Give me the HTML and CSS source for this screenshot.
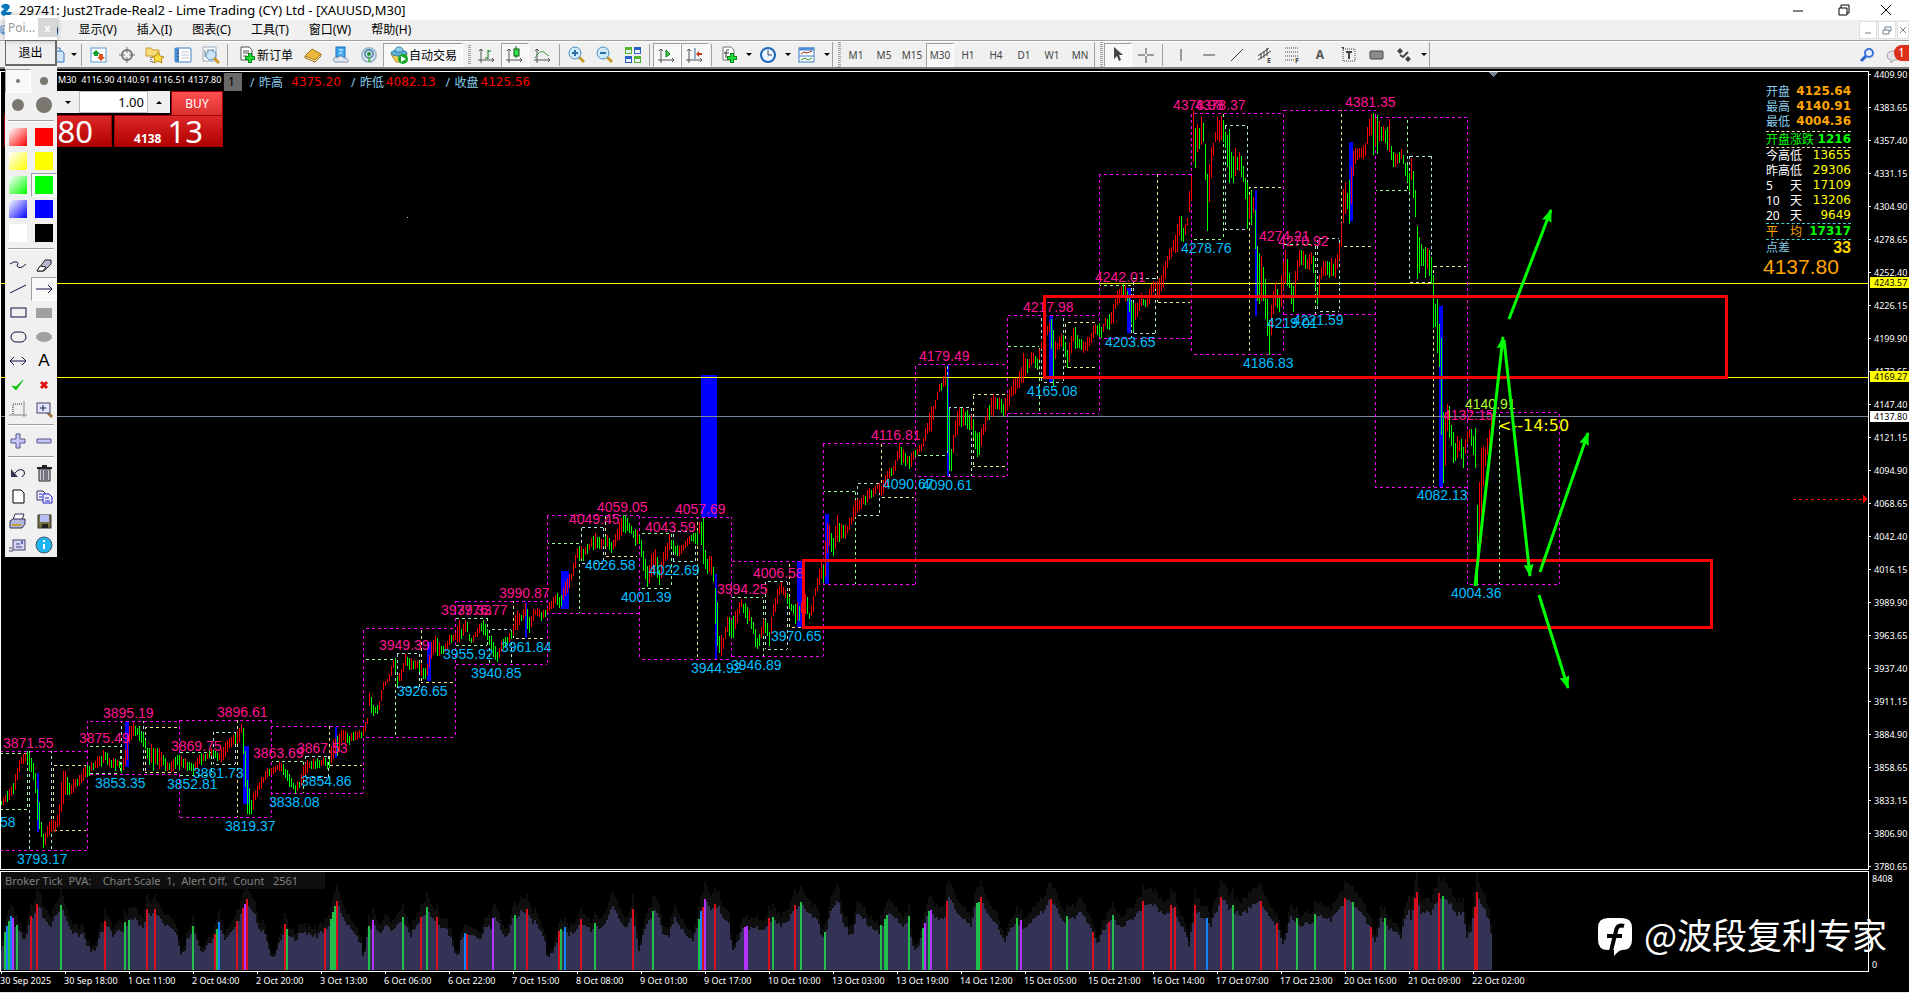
FILE: index.html
```html
<!DOCTYPE html>
<html lang="zh-CN">
  <head>
    <meta charset="UTF-8" />
    <meta name="viewport" content="width=device-width, initial-scale=1.0" />
    <title>29741: Just2Trade-Real2 - Lime Trading (CY) Ltd - [XAUUSD,M30]</title>
    <link rel="stylesheet" href="styles.css">
  </head>
  <body>
    <header class="titlebar">
      <svg class="logo" width="13" height="14" viewBox="0 0 13 14"><path d="M1 3Q5-1 9 2Q11 4 8 7L6 9L12 9Q11 13 6 13Q0 13 1 9Q2 7 5 6Q2 6 1 3Z" fill="#0a7abf"/></svg>
      <h1>29741: Just2Trade-Real2 - Lime Trading (CY) Ltd - [XAUUSD,M30]</h1>
      <div class="window-buttons">
        <button aria-label="最小化"><svg width="12" height="12" viewBox="0 0 12 12"><path d="M1 7H11"/></svg></button>
        <button aria-label="还原"><svg width="12" height="12" viewBox="0 0 12 12"><path d="M1 4H9V11H1ZM3 4V1H11V9H9"/></svg></button>
        <button aria-label="关闭"><svg width="12" height="12" viewBox="0 0 12 12"><path d="M1 1L11 11M11 1L1 11"/></svg></button>
      </div>
    </header>

    <nav class="menubar">
      <svg class="menu-icon" width="8" height="12" viewBox="0 0 8 12"><path d="M1 2H7V9H1ZM3 4V11" fill="none" stroke="#4a86c8"/></svg>
      <button>文件(F)</button>
      <button>显示(V)</button>
      <button>插入(I)</button>
      <button>图表(C)</button>
      <button>工具(T)</button>
      <button>窗口(W)</button>
      <button>帮助(H)</button>
      <div class="child-buttons">
        <button aria-label="最小化图表"><svg width="10" height="10" viewBox="0 0 10 10"><path d="M2 8H8"/></svg></button>
        <button aria-label="还原图表"><svg width="10" height="10" viewBox="0 0 10 10"><path d="M1 5H7V9H1ZM3 5V2H9V6H7"/></svg></button>
        <button aria-label="关闭图表"><svg width="10" height="10" viewBox="0 0 10 10"><path d="M2 2L8 8M8 2L2 8"/></svg></button>
      </div>
    </nav>

    <div class="toolbar">
      <button class="tool doc" aria-label="新图表"><svg width="20" height="20" viewBox="0 0 20 20"><path d="M3 3H12V14H3Z" fill="#fff" stroke="#3a78b8"/><path d="M7 6H14L16 8V17H7Z" fill="#cfe4f8" stroke="#3a78b8"/></svg></button>
      <button class="caret" aria-label="展开"></button>
      <span class="sep"></span>
      <button class="tool" aria-label="市场报价"><svg width="20" height="20" viewBox="0 0 20 20"><rect x="2" y="3" width="15" height="14" fill="#fff" stroke="#5b9bd5"/><path d="M7 5L11 9H9V11H5V9H3Z" fill="#11a030"/><path d="M12 16L8 12H10V9H14V12H16Z" fill="#e0521c"/></svg></button>
      <button class="tool" aria-label="数据窗口"><svg width="20" height="20" viewBox="0 0 20 20"><circle cx="10" cy="10" r="5" fill="none" stroke="#777" stroke-width="2"/><path d="M10 2V8M10 12V18M2 10H8M12 10H18" stroke="#777"/></svg></button>
      <button class="tool" aria-label="导航"><svg width="20" height="20" viewBox="0 0 20 20"><path d="M1 3H6L8 5H14V11H1Z" fill="#f7dc7c" stroke="#c49a2a"/><path d="M6 12V17H11" fill="none" stroke="#222" stroke-dasharray="1 1"/><path d="M13 7L15 11L19 12L16 14L17 18L13 16L9 18L10 14L7 12L11 11Z" fill="#ffe03a" stroke="#b88a18"/></svg></button>
      <button class="tool" aria-label="终端"><svg width="20" height="20" viewBox="0 0 20 20"><rect x="2" y="3" width="16" height="14" rx="1" fill="#fff" stroke="#3f7fc4"/><path d="M2 3H6V17H2Z" fill="#4b8fd8"/><path d="M8 7H16M8 10H16M8 13H16" stroke="#b9c9dc"/><path d="M5 5V15" stroke="#222" stroke-dasharray="1 2"/></svg></button>
      <button class="tool" aria-label="策略测试"><svg width="20" height="20" viewBox="0 0 20 20"><rect x="2" y="2" width="13" height="14" fill="#fff" stroke="#9ab"/><path d="M4 5V12M7 4V10M12 4V8" stroke="#678"/><circle cx="10" cy="10" r="5" fill="#bfe0f5" fill-opacity=".8" stroke="#5b8fb5"/><path d="M13 13L18 18" stroke="#c9982c" stroke-width="3"/></svg></button>
      <span class="sep"></span>
      <button class="tool order"><svg width="20" height="20" viewBox="0 0 20 20"><path d="M4 2H12L15 5V15H4Z" fill="#fff" stroke="#555"/><path d="M6 6H12M6 8H12M6 11H10" stroke="#555"/><path d="M13 8V18M8 13H18" stroke="#0a8c12" stroke-width="4"/><path d="M13 9V17M9 13H17" stroke="#1fe03a" stroke-width="2"/></svg>新订单</button>
      <button class="tool" aria-label="MetaEditor"><svg width="20" height="20" viewBox="0 0 20 20"><path d="M2 11L9 4L18 9L12 17Z" fill="#eab93e" stroke="#a5761a"/><path d="M2 11L12 15L18 9V11L12 17L2 13Z" fill="#fff3c8" stroke="#a5761a"/></svg></button>
      <button class="tool" aria-label="社区"><svg width="20" height="20" viewBox="0 0 20 20"><rect x="5" y="2" width="9" height="10" fill="#3fa9f0" stroke="#1c6fb4"/><path d="M8 5H12M8 8H11" stroke="#fff"/><path d="M4 17Q1 16 3 13Q5 12 6 13Q10 9 13 13Q18 13 17 17Z" fill="#dfe8f2" stroke="#8495a8"/></svg></button>
      <button class="tool" aria-label="信号"><svg width="20" height="20" viewBox="0 0 20 20"><circle cx="10" cy="10" r="7" fill="none" stroke="#9dbdd3" stroke-width="2"/><circle cx="10" cy="9" r="4" fill="none" stroke="#5a90b4" stroke-width="2"/><circle cx="10" cy="9" r="2" fill="#1f8b3a"/><path d="M10 9L12 17H9Z" fill="#52b552"/></svg></button>
      <button class="tool auto pressed"><svg width="20" height="20" viewBox="0 0 20 20"><path d="M2 9L7 17H16L18 9Z" fill="#f4cf58" stroke="#b98f24"/><ellipse cx="10" cy="8" rx="8" ry="3" fill="#5fb0d6" stroke="#2f7fa5"/><path d="M6 7Q6 2 10 2Q14 2 14 7Z" fill="#8fd0ee" stroke="#2f7fa5"/><circle cx="14" cy="14" r="5" fill="#18a82a"/><path d="M12 11L17 14L12 17Z" fill="#fff"/></svg>自动交易</button>
      <span class="grip"></span>
      <button class="tool" aria-label="柱状图"><svg width="20" height="20" viewBox="0 0 20 20"><path d="M4 4V18M1 15H17M2 6L4 4L6 6M15 13L17 15L15 17" class="ax"/><path d="M11 5V14M11 6H14M8 13H11" stroke="#0a7a18"/></svg></button>
      <button class="tool pressed" aria-label="阴阳烛"><svg width="20" height="20" viewBox="0 0 20 20"><path d="M4 4V18M1 15H17M2 6L4 4L6 6M15 13L17 15L15 17" class="ax"/><path d="M11 1V13" stroke="#075f10"/><rect x="9" y="4" width="5" height="7" fill="#35e04a" stroke="#075f10"/></svg></button>
      <button class="tool" aria-label="折线图"><svg width="20" height="20" viewBox="0 0 20 20"><path d="M4 4V18M1 15H17M2 6L4 4L6 6M15 13L17 15L15 17" class="ax"/><path d="M2 13Q8 3 12 8L16 11" fill="none" stroke="#3aa04a"/></svg></button>
      <span class="sep"></span>
      <button class="tool" aria-label="放大"><svg width="20" height="20" viewBox="0 0 20 20"><path d="M12 12L17 17" stroke="#c79a2a" stroke-width="3"/><circle cx="8" cy="8" r="6" fill="#cfeafb" stroke="#4a90c4"/><path d="M8 5V11M5 8H11" stroke="#2b6ea4" stroke-width="2"/></svg></button>
      <button class="tool" aria-label="缩小"><svg width="20" height="20" viewBox="0 0 20 20"><path d="M12 12L17 17" stroke="#c79a2a" stroke-width="3"/><circle cx="8" cy="8" r="6" fill="#cfeafb" stroke="#4a90c4"/><path d="M5 8H11" stroke="#2b6ea4" stroke-width="2"/></svg></button>
      <button class="tool" aria-label="平铺窗口"><svg width="20" height="20" viewBox="0 0 20 20"><path d="M2 2H9V9H2ZM11 11H18V18H11Z" fill="#52b52a"/><path d="M11 2H18V9H11ZM2 11H9V18H2Z" fill="#2a5fc4"/><path d="M3 5H8V8H3ZM12 5H17V8H12ZM3 14H8V17H3ZM12 14H17V17H12Z" fill="#e9f2ff"/></svg></button>
      <span class="sep"></span>
      <button class="tool pressed" aria-label="自动滚动"><svg width="20" height="20" viewBox="0 0 20 20"><path d="M4 4V18M1 15H17M2 6L4 4L6 6M15 13L17 15L15 17" class="ax"/><path d="M9 5L13 9L9 12Z" fill="#3fd04f" stroke="#0a7a18"/></svg></button>
      <button class="tool pressed" aria-label="图表平移"><svg width="20" height="20" viewBox="0 0 20 20"><path d="M4 4V18M1 15H17M2 6L4 4L6 6M15 13L17 15L15 17" class="ax"/><path d="M10 3V14" stroke="#2d6fa8"/><path d="M11 9L14 6V8H17V10H14V12Z" fill="#c43a10"/></svg></button>
      <span class="sep"></span>
      <button class="tool" aria-label="技术指标"><svg width="20" height="20" viewBox="0 0 20 20"><path d="M4 2H12L15 5V15H4Z" fill="#fff" stroke="#777"/><path d="M10 5Q7 4 7 8V13M5 8H10" fill="none" stroke="#333"/><path d="M13 8V18M8 13H18" stroke="#0a8c12" stroke-width="4"/><path d="M13 9V17M9 13H17" stroke="#1fe03a" stroke-width="2"/></svg></button>
      <button class="caret" aria-label="展开指标"></button>
      <button class="tool" aria-label="时间周期"><svg width="20" height="20" viewBox="0 0 20 20"><circle cx="10" cy="10" r="7" fill="#eef6ff" stroke="#1a66b8" stroke-width="2"/><path d="M10 5V10H14" fill="none" stroke="#345"/></svg></button>
      <button class="caret" aria-label="展开周期"></button>
      <button class="tool" aria-label="模板"><svg width="20" height="20" viewBox="0 0 20 20"><rect x="2" y="3" width="15" height="14" fill="#fff" stroke="#3f7fc4"/><path d="M2 4H17" stroke="#4b8fd8" stroke-width="3"/><path d="M4 9L7 7L10 8L15 6" fill="none" stroke="#a03010"/><path d="M2 11H17" stroke="#3f7fc4"/><path d="M4 15L8 13L11 15L15 13" fill="none" stroke="#2f9a3a"/></svg></button>
      <button class="caret" aria-label="展开模板"></button>
      <span class="grip edge"></span>
      <button class="tool period">M1</button>
      <button class="tool period">M5</button>
      <button class="tool period">M15</button>
      <button class="tool period pressed">M30</button>
      <button class="tool period">H1</button>
      <button class="tool period">H4</button>
      <button class="tool period">D1</button>
      <button class="tool period">W1</button>
      <button class="tool period">MN</button>
      <span class="grip edge"></span>
      <button class="tool pressed" aria-label="光标"><svg width="20" height="20" viewBox="0 0 20 20"><path d="M6 2L6 14L9 11L11 16L13 15L11 10H15Z" fill="#444"/></svg></button>
      <button class="tool" aria-label="十字线"><svg width="20" height="20" viewBox="0 0 20 20"><path d="M10 3V9M10 11V18M2 10H9M11 10H18" stroke="#444"/></svg></button>
      <span class="sep"></span>
      <button class="tool" aria-label="垂直线"><svg width="20" height="20" viewBox="0 0 20 20"><path d="M11 4V16" stroke="#444"/></svg></button>
      <button class="tool" aria-label="水平线"><svg width="20" height="20" viewBox="0 0 20 20"><path d="M5 10H17" stroke="#444"/></svg></button>
      <button class="tool" aria-label="趋势线"><svg width="20" height="20" viewBox="0 0 20 20"><path d="M5 16L17 4" stroke="#444"/></svg></button>
      <button class="tool" aria-label="等距通道"><svg width="20" height="20" viewBox="0 0 20 20"><path d="M4 11L15 3M4 15L17 6M7 8V14M10 6V13M13 3V11" stroke="#444"/><text x="13" y="18" class="mini">E</text></svg></button>
      <button class="tool" aria-label="斐波那契"><svg width="20" height="20" viewBox="0 0 20 20"><path d="M3 3H17M3 7H17M3 11H17M3 15H12" stroke="#444" stroke-dasharray="1 1"/><text x="13" y="18" class="mini">F</text></svg></button>
      <button class="tool letter" aria-label="文字">A</button>
      <button class="tool" aria-label="文字标签"><svg width="20" height="20" viewBox="0 0 20 20"><rect x="5" y="4" width="12" height="12" fill="none" stroke="#444" stroke-dasharray="1 1"/><path d="M8 7H14M11 7V14" stroke="#444" stroke-width="2"/><path d="M3 2H6V5Z" fill="#444"/></svg></button>
      <button class="tool" aria-label="矩形"><svg width="20" height="20" viewBox="0 0 20 20"><rect x="4" y="6" width="13" height="8" rx="1" fill="#8c8c8c" stroke="#444"/></svg></button>
      <button class="tool" aria-label="箭头"><svg width="20" height="20" viewBox="0 0 20 20"><path d="M6 3L9 6L6 9L3 6ZM14 11L17 14L14 17L11 14Z" fill="#444"/><path d="M6 10L9 12L14 7" fill="none" stroke="#444" stroke-width="2"/></svg></button>
      <button class="caret" aria-label="展开箭头"></button>
      <span class="edge-line"></span>
      <div class="toolbar-right">
        <button class="tool" aria-label="搜索"><svg width="20" height="20" viewBox="0 0 20 20"><path d="M4 16L9 11" stroke="#2c62c8" stroke-width="3"/><circle cx="12" cy="8" r="4" fill="#eaf2ff" stroke="#3a74d8" stroke-width="2"/></svg></button>
        <button class="tool chat" aria-label="通知"><svg width="20" height="20" viewBox="0 0 20 20"><path d="M2 11Q2 6 9 6Q16 6 16 11Q16 15 9 15L6 18V15Q2 14 2 11Z" fill="#e4e4e8" stroke="#a0a0a8"/></svg><span class="badge">1</span></button>
      </div>
    </div>

    <main class="terminal">
      <section class="price-pane">
        <svg id="price" viewBox="1 72 1867 797" preserveAspectRatio="xMinYMin meet">
          <defs>
            <marker id="head" markerUnits="userSpaceOnUse" markerWidth="14" markerHeight="10" refX="12" refY="5" orient="auto"><path d="M0 0L13 5L0 10L2 5Z" fill="#00ff00"/></marker>
          </defs>
        </svg>

        <div class="quote-line">
          <span class="ohlc">M30&nbsp; 4116.90 4140.91 4116.51 4137.80</span>
          <span class="chip">1</span>
          <span class="yesterday"><i>/</i>昨高&nbsp;&nbsp;<b>4375.20</b></span>
          <span class="yesterday"><i>/</i>昨低<b>4082.13</b></span>
          <span class="yesterday"><i>/</i>收盘<b>4125.56</b></span>
        </div>

        <form class="one-click">
          <div class="volume">
            <button type="button" class="down" aria-label="减少"></button>
            <input type="text" value="1.00" aria-label="手数">
            <button type="button" class="up" aria-label="增加"></button>
          </div>
          <button type="button" class="buy">BUY</button>
          <button type="button" class="bid">80</button>
          <button type="button" class="ask"><small>4138</small>13</button>
        </form>

        <aside class="info">
          <dl>
            <div class="sky"><dt>开盘</dt><dd>4125.64</dd></div>
            <div class="sky"><dt>最高</dt><dd>4140.91</dd></div>
            <div class="sky"><dt>最低</dt><dd>4004.36</dd></div>
            <div class="change"><dt>开盘涨跌</dt><dd>1216</dd></div>
            <div class="range"><dt>今高低</dt><dd>13655</dd></div>
            <div class="range"><dt>昨高低</dt><dd>29306</dd></div>
            <div class="range"><dt><i>5</i>天</dt><dd>17109</dd></div>
            <div class="range"><dt><i>10</i>天</dt><dd>13206</dd></div>
            <div class="range"><dt><i>20</i>天</dt><dd>9649</dd></div>
            <div class="average"><dt><i>平</i>均</dt><dd>17317</dd></div>
            <div class="spread"><dt>点差</dt><dd>33</dd></div>
          </dl>
          <p class="last">4137.80</p>
        </aside>
      </section>

      <div class="price-axis">
        <ol id="prices"></ol>
        <span class="tag tag-high">4243.57</span>
        <span class="tag tag-low">4169.27</span>
        <span class="tag tag-bid">4137.80</span>
      </div>

      <section class="volume-pane">
        <svg id="volume" viewBox="1 872 1867 99" preserveAspectRatio="xMinYMin meet"></svg>
        <p class="pva">Broker Tick&nbsp; PVA:&nbsp; &nbsp; Chart Scale&nbsp; 1,&nbsp; Alert Off,&nbsp; Count&nbsp; &nbsp;2561</p>
      </section>
      <div class="volume-axis"><span>8408</span><span>0</span></div>

      <ol class="time-axis" id="times"></ol>

      <div class="watermark">
        <svg width="34" height="38" viewBox="0 0 34 38"><path d="M10 0H24Q34 0 34 10V22Q34 32 24 32Q21 32 16 38V32H10Q0 32 0 22V10Q0 0 10 0Z" fill="#fff"/><path d="M26 8Q19 6 18 13L13 33M9 18H24" fill="none" stroke="#000" stroke-width="4"/></svg>
        <span>@波段复利专家</span>
      </div>
    </main>

    <aside class="palette">
      <div class="palette-title"><span>Poi...</span><button aria-label="关闭画笔">x</button></div>
      <button class="exit">退出</button>
      <div class="cells dots">
        <button class="on" aria-label="笔尖1"><svg width="20" height="20"><circle cx="10" cy="10" r="2" fill="#7a7670"/></svg></button>
        <button aria-label="笔尖2"><svg width="20" height="20"><circle cx="10" cy="10" r="4" fill="#7a7670"/></svg></button>
        <button aria-label="笔尖3"><svg width="20" height="20"><circle cx="10" cy="10" r="6" fill="#7a7670"/></svg></button>
        <button aria-label="笔尖4"><svg width="20" height="20"><circle cx="10" cy="10" r="8" fill="#7a7670"/></svg></button>
      </div>
      <hr>
      <div class="cells colors">
        <button aria-label="透明红"><i class="swatch fade-red"></i></button>
        <button aria-label="红"><i class="swatch red"></i></button>
        <button aria-label="透明黄"><i class="swatch fade-yellow"></i></button>
        <button aria-label="黄"><i class="swatch yellow"></i></button>
        <button aria-label="透明绿"><i class="swatch fade-green"></i></button>
        <button class="on" aria-label="绿"><i class="swatch green"></i></button>
        <button aria-label="透明蓝"><i class="swatch fade-blue"></i></button>
        <button aria-label="蓝"><i class="swatch blue"></i></button>
        <button aria-label="白"><i class="swatch white"></i></button>
        <button aria-label="黑"><i class="swatch black"></i></button>
      </div>
      <hr>
      <div class="cells tools">
        <button aria-label="曲线"><svg width="20" height="20"><path d="M2 9Q6 6 9 7Q11 8 9 11Q12 15 18 9" class="ink"/></svg></button>
        <button aria-label="橡皮"><svg width="20" height="20"><path d="M3 16L11 5H17V9L10 16Z" fill="#b9b6d4" stroke="#222"/><path d="M3 16L6 11L12 12L9 16Z" fill="#fff" stroke="#222"/></svg></button>
        <button aria-label="直线"><svg width="20" height="20"><path d="M2 14L18 6" class="ink"/></svg></button>
        <button class="on" aria-label="箭头线"><svg width="20" height="20"><path d="M2 10H18M14 6L18 10L14 14" class="ink"/></svg></button>
        <button aria-label="空心矩形"><svg width="20" height="20"><rect x="3" y="5" width="15" height="9" class="ink"/></svg></button>
        <button aria-label="实心矩形"><svg width="20" height="20"><rect x="2" y="5" width="16" height="10" fill="#a0a0a0"/></svg></button>
        <button aria-label="空心椭圆"><svg width="20" height="20"><rect x="3" y="5" width="15" height="10" rx="5" class="ink"/></svg></button>
        <button aria-label="实心椭圆"><svg width="20" height="20"><ellipse cx="10" cy="10" rx="8" ry="5" fill="#a0a0a0"/></svg></button>
        <button aria-label="双向箭头"><svg width="20" height="20"><path d="M2 10H18M6 6L2 10L6 14M14 6L18 10L14 14" class="ink"/></svg></button>
        <button class="text-tool" aria-label="文本">A</button>
        <button aria-label="勾"><svg width="20" height="20"><path d="M4 11L8 15L15 5L8 12Z" fill="#12c012" stroke="#12c012"/></svg></button>
        <button aria-label="叉"><svg width="20" height="20"><path d="M7 7L13 13M13 7L7 13" stroke="#e01010" stroke-width="3"/></svg></button>
        <button aria-label="裁剪"><svg width="20" height="20"><path d="M5 15V5H15" fill="none" stroke="#222" stroke-dasharray="1 1"/><path d="M1 16H19M16 2V18" stroke="#888"/></svg></button>
        <button aria-label="放大镜"><svg width="20" height="20"><path d="M13 13L18 18" stroke="#a07a3c" stroke-width="3"/><rect x="3" y="4" width="13" height="10" fill="#e0e4ff" stroke="#446"/><path d="M9 6V12M6 9H12" stroke="#224"/></svg></button>
      </div>
      <hr>
      <div class="cells single">
        <button aria-label="加"><svg width="20" height="20"><path d="M8 3H12V8H17V12H12V17H8V12H3V8H8Z" fill="#c4c6f8" stroke="#558"/></svg></button>
        <button aria-label="减"><svg width="20" height="20"><path d="M3 8H17V12H3Z" fill="#c4c6f8" stroke="#558"/></svg></button>
      </div>
      <hr>
      <div class="cells files">
        <button aria-label="撤销"><svg width="20" height="20"><path d="M6 11Q12 4 16 8Q18 11 14 14" class="ink"/><path d="M3 6V14H10Z" fill="#335"/></svg></button>
        <button aria-label="清除"><svg width="20" height="20"><path d="M5 6H16V18H5Z" fill="#c8c8d4" stroke="#222"/><path d="M3 5H18M8 3H13" stroke="#222" stroke-width="2"/><path d="M8 7V17M11 7V17M13 7V17" stroke="#222"/></svg></button>
        <button aria-label="新建"><svg width="20" height="20"><path d="M5 3H13L16 6V16H5Z" fill="#fff" stroke="#000"/></svg></button>
        <button aria-label="复制"><svg width="20" height="20"><path d="M3 4H9L11 6V13H3Z" fill="#eef" stroke="#335"/><path d="M9 7H15L18 10V16H9Z" fill="#eef" stroke="#22c"/><path d="M5 7H8M5 10H8M11 11H15M11 14H16" stroke="#22c"/></svg></button>
        <button aria-label="打印"><svg width="20" height="20"><path d="M7 3H16L14 9H5Z" fill="#fff" stroke="#335"/><path d="M2 10L5 8H17V13L14 17H2Z" fill="#b4b6dc" stroke="#335"/><path d="M4 14H13" stroke="#c0a030" stroke-width="2"/></svg></button>
        <button aria-label="保存"><svg width="20" height="20"><rect x="4" y="4" width="13" height="13" fill="#777040" stroke="#333"/><rect x="6" y="4" width="9" height="7" fill="#b8baf4"/><rect x="8" y="13" width="6" height="4" fill="#222"/></svg></button>
        <button aria-label="邮件"><svg width="20" height="20"><rect x="5" y="5" width="12" height="10" fill="#d4d4f8" stroke="#446"/><path d="M8 9H12M8 12H14M1 13H4M1 16H5" stroke="#446"/><rect x="13" y="6" width="2" height="3" fill="#66a"/></svg></button>
        <button aria-label="关于"><svg width="20" height="20"><circle cx="10" cy="10" r="8" fill="#20b4ee" stroke="#456"/><path d="M10 5V7M10 9V14" stroke="#fff" stroke-width="2"/></svg></button>
      </div>
    </aside>
    <script src="chart.js"></script>
  </body>
</html>
```
FILE: styles.css
```css
* {
  box-sizing: border-box;
}
body {
  margin: 0;
  height: 100vh;
  display: flex;
  flex-direction: column;
  overflow: hidden;
  position: relative;
  background: #f0f0f0;
  font-family: "Noto Sans", "Noto Sans CJK SC", sans-serif;
  font-size: 12px;
  color: #000;
}
button {
  border: none;
  background: none;
  padding: 0;
  margin: 0;
  font: inherit;
  color: inherit;
}
svg {
  display: block;
  flex: none;
}
h1,
p,
ol,
dl,
dd {
  margin: 0;
  padding: 0;
}
ol {
  list-style: none;
}

/* window title and menu */
.titlebar {
  height: 20px;
  display: flex;
  align-items: center;
  background: #fff;
}
.logo {
  margin-right: 6px;
}
.titlebar h1 {
  font-size: 13px;
  line-height: 18px;
  font-weight: 400;
}
.window-buttons {
  margin-left: auto;
  display: flex;
}
.window-buttons button {
  width: 46px;
  display: flex;
  justify-content: center;
}
.window-buttons button:last-child {
  width: 42px;
  padding-right: 5px;
}
.window-buttons path,
.child-buttons path {
  fill: none;
  stroke: #000;
}
.menubar {
  height: 21px;
  display: flex;
  align-items: center;
  border-bottom: 1px solid #a0a0a0;
}
.menu-icon {
  margin-right: 3px;
}
.menubar > button {
  padding: 0 10px;
  line-height: 20px;
}
.child-buttons {
  margin-left: auto;
  display: flex;
  gap: 1px;
}
.child-buttons button {
  width: 18px;
  height: 18px;
  display: flex;
  align-items: center;
  justify-content: center;
  background: #fff;
  border: 1px solid #e0e0e0;
}
.child-buttons button:last-child {
  width: 12px;
}
.child-buttons path {
  stroke: #708090;
}

/* toolbar */
.toolbar {
  height: 28px;
  display: flex;
  align-items: center;
  padding-left: 48px;
  border-top: 1px solid #fff;
  border-bottom: 2px solid #808080;
  white-space: nowrap;
}
.tool {
  width: 28px;
  height: 24px;
  flex: none;
  display: flex;
  align-items: center;
  justify-content: center;
}
.doc {
  width: 20px;
}
.order {
  width: 68px;
}
.auto {
  width: 80px;
}
.pressed {
  background: #f8f8f8;
  border: 1px solid #fff;
  border-top-color: #a0a0a0;
  border-left-color: #a0a0a0;
}
.caret {
  width: 11px;
  height: 20px;
  flex: none;
}
.caret::before,
.volume button::before {
  content: "";
  display: block;
  width: 0;
  margin: 0 auto;
  border: 3px solid transparent;
  border-top-color: #000;
  border-bottom: none;
}
.sep {
  width: 6px;
  height: 22px;
  flex: none;
  border-left: 1px solid #a0a0a0;
  margin-left: 2px;
  margin-right: -2px;
}
.grip {
  width: 10px;
  height: 20px;
  flex: none;
  background: repeating-linear-gradient(#a0a0a0 0 1px, #f0f0f0 1px 2px) 5px 0 / 3px 100% no-repeat;
}
.edge {
  height: 25px;
  border-left: 1px solid #a0a0a0;
}
.edge-line {
  height: 25px;
  border-left: 1px solid #a0a0a0;
}
.ax {
  fill: none;
  stroke: #555;
}
.period {
  font-size: 10px;
  color: #444;
}
.letter {
  font-size: 12px;
  font-weight: 700;
  color: #555;
}
.mini {
  font-size: 7px;
  font-weight: 700;
  fill: #444;
}
.toolbar-right {
  margin-left: auto;
  display: flex;
}
.chat {
  position: relative;
}
.badge {
  position: absolute;
  right: 0;
  top: 2px;
  width: 15px;
  height: 16px;
  border-radius: 8px 0 0 8px;
  background: #dc3018;
  color: #fff;
  line-height: 16px;
  text-align: center;
}

/* chart area */
.terminal {
  flex: 1;
  min-height: 0;
  position: relative;
  display: grid;
  grid-template-columns: minmax(0, 1fr) 40px;
  grid-template-rows: minmax(0, 1fr) 101px 20px;
  padding-top: 2px;
  background: #000;
  border-bottom: 1px solid #e8e8e8;
  color: #fff;
}
.price-pane,
.volume-pane {
  position: relative;
  overflow: hidden;
  border: 1px solid #fff;
}
.price-pane {
  margin-bottom: 1px;
}
.price-pane > svg,
.volume-pane > svg {
  width: 100%;
  height: 100%;
}
.shapes {
  shape-rendering: crispEdges;
}
.label {
  font-family: "Liberation Sans", sans-serif;
  font-size: 14px;
}
.countdown {
  font-family: "DejaVu Sans", sans-serif;
  font-size: 16px;
  fill: #ff0;
}

.quote-line {
  position: absolute;
  left: 57px;
  top: 1px;
  display: flex;
  align-items: center;
  white-space: nowrap;
}
.ohlc {
  width: 166px;
  font-size: 9px;
  line-height: 14px;
  align-self: flex-start;
}
.chip {
  width: 18px;
  height: 18px;
  margin-right: 8px;
  background: #696969;
  color: #000;
  line-height: 18px;
  padding-left: 4px;
}
.yesterday {
  display: flex;
  align-items: center;
  color: #87ceeb;
  margin-right: 10px;
}
.yesterday i {
  width: 9px;
  font-style: normal;
}
.yesterday b {
  margin-left: 2px;
  font-family: "DejaVu Sans", sans-serif;
  font-weight: 400;
  color: #f00;
}

.one-click {
  position: absolute;
  left: 3px;
  top: 19px;
  width: 219px;
  display: grid;
  grid-template-columns: 109px 56px 52px;
  grid-template-rows: 24px 32px;
  column-gap: 1px;
}
.volume {
  grid-column: 1 / 3;
  height: 22px;
  padding-left: 53px;
  display: flex;
}
.volume button {
  width: 22px;
  background: #f0f0f0;
}
.volume .up::before {
  border-top: none;
  border-bottom: 3px solid #000;
}
.volume input {
  flex: 1;
  min-width: 0;
  border: 1px solid #bbb;
  padding: 0 3px;
  text-align: right;
  font: inherit;
  font-size: 13px;
}
.buy,
.bid,
.ask {
  color: #fff;
  border: 1px solid #a00000;
}
.buy {
  background: linear-gradient(#ff5050, #dc3030);
  border-bottom: none;
}
.bid,
.ask {
  background: linear-gradient(#dc2828, #b00000);
  font-size: 31px;
  line-height: 30px;
}
.bid {
  margin-right: 1px;
  text-align: right;
  padding-right: 18px;
}
.ask {
  grid-column: 2 / 4;
}
.ask small {
  font-size: 12px;
  font-weight: 700;
  margin-right: 6px;
}

.info {
  position: absolute;
  top: 12px;
  right: 17px;
  width: 85px;
  font-size: 12px;
}
.info dl div {
  display: flex;
  justify-content: space-between;
  line-height: 15px;
}
.info dt {
  white-space: nowrap;
}
.info dd {
  font-family: "DejaVu Sans", sans-serif;
}
.info dt i {
  display: inline-block;
  width: 24px;
  font-style: normal;
}
.info .sky {
  color: #87ceeb;
}
.info .sky dd {
  color: #ffa500;
  font-weight: 700;
}
.info .change {
  margin-top: 2px;
  border-top: 1px dashed #f5deb3;
  border-bottom: 1px dashed #f5deb3;
  color: #0f0;
}
.info .change dd,
.info .average dd {
  color: #0f0;
  font-weight: 700;
}
.info .range dd {
  color: #ff0;
}
.info .average {
  border-top: 1px dashed #48d1cc;
  border-bottom: 1px dashed #48d1cc;
  color: #ffa500;
}
.info .spread {
  color: #87ceeb;
}
.info .spread dd {
  font-family: "Liberation Sans", sans-serif;
  font-size: 16px;
  font-weight: 700;
  color: #ffd700;
}
.info .last {
  font-family: "Liberation Sans", sans-serif;
  font-size: 21px;
  line-height: 24px;
  margin-left: -3px;
  color: #ffa500;
}

.price-axis {
  position: relative;
  font-size: 9px;
}
.price-axis ol {
  margin-top: -2px;
}
.price-axis li {
  display: flex;
  align-items: center;
  gap: 3px;
  line-height: 11px;
  margin-bottom: 22px;
}
.price-axis li::before {
  content: "";
  width: 2px;
  height: 1px;
  background: #fff;
}
.price-axis li:last-child {
  margin-bottom: 0;
}
.tag {
  position: absolute;
  left: 1px;
  right: 0;
  padding-left: 4px;
  line-height: 11px;
  background: #ff0;
  color: #000;
}
.tag-high {
  top: 206px;
}
.tag-low {
  top: 300px;
}
.tag-bid {
  top: 340px;
  background: #fff;
}
.pva {
  position: absolute;
  left: 0;
  top: 0;
  width: 324px;
  padding-left: 4px;
  background: #0f0f0f;
  color: #808080;
  font-size: 11px;
  line-height: 17px;
  white-space: nowrap;
}
.volume-axis {
  display: flex;
  flex-direction: column;
  justify-content: space-between;
  padding: 1px 0 0 3px;
  font-size: 9px;
  line-height: 14px;
}
.time-axis {
  grid-column: 1 / 3;
  display: flex;
  overflow: hidden;
  font-size: 9px;
}
.time-axis li {
  width: 64px;
  flex: none;
  line-height: 14px;
  white-space: nowrap;
}
.time-axis li::before {
  content: "";
  display: block;
  width: 1px;
  height: 2px;
  margin-left: 1px;
  background: #fff;
}

.watermark {
  position: absolute;
  right: 22px;
  bottom: 36px;
  display: flex;
  align-items: flex-end;
  gap: 12px;
  font-family: "Noto Sans CJK SC", sans-serif;
  font-size: 35px;
  line-height: 44px;
  color: #fff;
}

/* floating drawing palette */
.palette {
  position: absolute;
  left: 5px;
  top: 15px;
  width: 52px;
  background: #f0f0f0;
}
.palette-title {
  height: 25px;
  display: flex;
  align-items: center;
  justify-content: space-between;
  padding-left: 3px;
  background: #fff;
  color: #999;
  box-shadow: 0 0 6px rgba(0, 0, 0, 0.3);
}
.palette-title button {
  width: 19px;
  height: 19px;
  background: #d8d8d8;
  color: #fff;
  font-size: 10px;
  font-weight: 700;
}
.exit {
  display: block;
  width: 52px;
  height: 26px;
  margin-bottom: 3px;
  border: 1px solid #696969;
  border-width: 1px 2px 2px 1px;
  line-height: 20px;
}
.cells {
  display: grid;
  grid-template-columns: 1fr 1fr;
  grid-auto-rows: 24px;
}
.cells button {
  display: flex;
  align-items: center;
  justify-content: center;
}
.cells .on {
  background: #f8f8f8;
  border: 1px solid #fff;
  border-top-color: #a0a0a0;
  border-left-color: #a0a0a0;
}
.palette hr {
  height: 2px;
  margin: 3px;
  border: none;
  border-top: 1px solid #a0a0a0;
  border-bottom: 1px solid #fff;
}
.ink {
  fill: none;
  stroke: #114;
}
.text-tool {
  font-family: "Liberation Sans", sans-serif;
  font-size: 17px;
}
.swatch {
  width: 18px;
  height: 18px;
}
.red {
  background: #f00;
}
.yellow {
  background: #ff0;
}
.green {
  background: #0f0;
}
.blue {
  background: #00f;
}
.white {
  background: #fff;
}
.black {
  background: #000;
}
.fade-red {
  background: linear-gradient(135deg, #fff, #f00);
}
.fade-yellow {
  background: linear-gradient(135deg, #fff, #ff0);
}
.fade-green {
  background: linear-gradient(135deg, #fff, #0f0);
}
.fade-blue {
  background: linear-gradient(135deg, #fff, #00f);
}
```
FILE: chart.js
```js
const SVG = 'http://www.w3.org/2000/svg';
const price = document.getElementById('price');
const volume = document.getElementById('volume');

function add(parent, name, attrs, text) {
  const el = document.createElementNS(SVG, name);
  for (const key in attrs) el.setAttribute(key, attrs[key]);
  if (text) el.textContent = text;
  parent.appendChild(el);
  return el;
}

// repeatable noise, 0..1
function noise(n) {
  const v = Math.sin(n * 12.9898) * 43758.5453;
  return v - Math.floor(v);
}

const shapes = add(price, 'g', { class: 'shapes' });

// volume spikes: x, y, width, height
const spikes = [
  [37, 773, 2, 59], [125, 722, 4, 45], [243, 746, 6, 58], [335, 727, 2, 31],
  [427, 642, 4, 39], [525, 602, 2, 36], [561, 571, 8, 38], [701, 375, 16, 142],
  [715, 574, 2, 85], [797, 561, 5, 66], [825, 514, 4, 70], [947, 365, 2, 111],
  [1049, 316, 4, 66], [1127, 288, 4, 45], [1255, 190, 2, 126],
  [1349, 142, 4, 79], [1439, 306, 4, 181],
];
for (const [x, y, width, height] of spikes) {
  add(shapes, 'rect', { x, y, width, height, fill: '#00f' });
}

for (const [y, fill] of [[283, '#ff0'], [377, '#ff0'], [416, '#778899']]) {
  add(shapes, 'rect', { x: 1, y, width: 1867, height: 1, fill });
}

// day and session ranges: x1, x2, top, bottom
const days = [
  [0, 87, 751, 850], [87, 179, 721, 774], [179, 271, 720, 817], [271, 363, 726, 793],
  [363, 455, 628, 737], [455, 547, 601, 664], [547, 639, 515, 613], [639, 731, 517, 659],
  [731, 823, 561, 656], [823, 915, 443, 584], [915, 1007, 364, 476], [1007, 1099, 315, 413],
  [1099, 1191, 174, 338], [1191, 1283, 113, 354], [1283, 1375, 110, 314],
  [1375, 1467, 117, 487], [1467, 1559, 412, 584],
];
const asia = [
  [0, 27, 753, 809], [88, 120, 746, 773], [180, 211, 752, 775], [272, 303, 761, 793],
  [364, 395, 659, 737], [456, 487, 618, 645], [548, 579, 543, 613], [640, 671, 533, 588],
  [732, 763, 597, 656], [824, 855, 491, 584], [916, 947, 364, 455], [1008, 1039, 346, 413],
  [1100, 1131, 285, 338], [1192, 1223, 113, 239], [1284, 1315, 244, 314],
  [1376, 1407, 117, 190], [1468, 1499, 412, 584],
];
const europe = [
  [29, 51, 751, 850], [121, 143, 721, 774], [213, 235, 732, 764], [305, 328, 756, 777],
  [397, 419, 653, 687], [489, 511, 629, 664], [581, 603, 527, 563], [673, 695, 531, 561],
  [765, 787, 581, 649], [857, 879, 483, 515], [949, 971, 407, 476], [1041, 1063, 315, 382],
  [1133, 1155, 278, 333], [1225, 1247, 125, 229], [1317, 1339, 238, 311],
  [1409, 1431, 156, 282],
];
const america = [
  [53, 86, 765, 830], [145, 178, 727, 772], [237, 270, 720, 817], [329, 362, 726, 765],
  [421, 454, 628, 682], [513, 546, 601, 638], [605, 637, 515, 556], [697, 730, 517, 659],
  [789, 822, 561, 627], [881, 914, 443, 497], [973, 1006, 394, 466], [1065, 1098, 322, 367],
  [1157, 1190, 174, 302], [1249, 1282, 187, 354], [1341, 1374, 110, 246],
  [1433, 1466, 266, 487],
];
function dashed(x1, y1, x2, y2, stroke) {
  // dashes keep the same phase on lines that share an edge
  const phase = x1 === x2 ? y1 % 6 : x1 % 6;
  add(shapes, 'line', { x1, y1, x2, y2, stroke, 'stroke-dasharray': '3 3', 'stroke-dashoffset': phase });
}
function ranges(list, stroke, left, right) {
  for (const [x1, x2, top, bottom] of list) {
    dashed(x1, top, x2, top, stroke);
    dashed(x1, bottom, x2, bottom, stroke);
    if (left) dashed(x1, top, x1, bottom, stroke);
    if (right) dashed(x2, top, x2, bottom, stroke);
  }
}
ranges(asia, '#98fb98', false, true);
ranges(europe, '#b0e0e6', true, true);
ranges(america, '#f0e68c', true, false);
ranges(days, '#f0f', true, true);

// swing points of the bars: x, high, low
const swings = `0,800,806 5,795,803 12,782,795 16,770,788 20,757,768 24,753,761 30,752,770 34,765,783
38,785,830 43,835,850 47,825,838 52,820,832 58,815,830 62,775,810 65,773,800 70,785,797 75,778,790
80,776,785 84,766,778 90,763,774 97,758,768 105,748,764 112,760,770 118,756,768 122,765,773
127,735,760 130,722,740 135,724,735 143,730,745 148,748,762 155,743,770 162,752,767 168,762,772
175,755,768 182,755,768 188,762,770 193,765,775 197,755,768 205,753,760 212,748,755 218,755,763
224,742,758 232,735,745 238,730,745 242,720,730 244,740,775 247,770,808 251,800,817 255,788,800
260,780,790 266,768,778 272,768,775 278,762,770 284,765,775 290,775,787 295,785,793 300,778,788
304,760,778 310,760,768 318,758,768 324,757,763 328,762,773 333,735,757 337,728,758 343,727,740
348,735,745 355,730,740 362,730,737 367,718,725 369,690,707 373,704,715 378,705,716 383,682,690
388,675,683 393,660,670 395,659,672 397,675,687 402,665,678 405,653,665 410,658,670 416,658,670
420,662,672 425,668,682 428,657,672 431,643,658 437,635,655 442,645,655 450,635,645 455,632,640
458,620,640 461,625,640 466,618,628 470,638,645 476,628,638 480,622,630 484,618,635 488,633,640
492,638,655 497,650,664 501,640,650 506,637,645 511,630,640 516,610,630 520,615,625 526,601,618
528,610,638 532,612,625 536,606,615 541,612,620 547,608,614 550,600,610 556,592,603 561,595,608
566,580,595 572,568,582 577,545,560 580,543,558 583,550,560 590,540,548 595,528,550 600,540,550
604,535,545 608,535,550 612,540,555 618,525,540 624,515,530 630,522,533 635,530,545 639,532,545
643,550,570 648,565,588 651,556,575 655,545,570 659,565,585 664,550,568 668,535,553 672,537,547
676,545,560 681,545,555 687,538,545 692,533,540 697,530,545 700,518,532 703,518,560 706,555,580
710,555,570 713,563,580 716,595,650 719,630,659 723,635,650 727,615,630 732,618,640 736,610,625
741,598,608 745,603,620 750,610,625 755,630,645 758,640,656 762,618,632 766,620,635 769,625,650
773,602,620 777,590,605 780,582,595 786,590,600 790,600,612 794,600,620 798,605,625 802,600,610
806,590,618 809,610,620 812,600,615 816,580,595 820,563,580 823,565,582 826,535,583 828,517,540
831,530,550 834,540,558 836,515,545 840,525,540 846,525,538 851,515,525 854,497,520 857,500,515
862,495,508 868,490,500 874,488,498 877,483,490 881,485,497 885,475,490 889,468,480 894,465,475
898,443,458 903,450,465 907,455,465 910,452,468 914,450,457 918,447,455 922,440,450 926,425,438
930,400,435 934,405,415 938,385,395 942,378,388 946,364,385 947,366,450 951,445,476 954,425,440
958,407,430 962,408,425 966,410,430 970,415,430 974,420,440 978,440,466 981,425,445 986,412,425
992,395,415 998,398,410 1004,402,420 1008,390,412 1012,380,395 1018,375,390 1023,355,380
1028,360,370 1032,350,362 1037,358,370 1041,340,350 1046,328,340 1050,316,330 1053,325,380
1057,340,350 1062,333,345 1067,348,366 1073,325,345 1078,335,350 1084,340,355 1090,332,345
1095,322,333 1101,325,338 1105,318,325 1109,315,330 1113,300,320 1118,290,302 1122,285,300
1128,288,305 1133,305,333 1136,302,318 1141,293,305 1146,300,310 1151,282,298 1156,278,290
1159,280,300 1163,265,285 1168,252,265 1172,240,255 1176,222,258 1180,214,235 1183,225,245
1187,215,228 1191,170,198 1193,113,170 1196,127,158 1200,118,150 1204,122,145 1207,170,238
1211,150,175 1216,120,140 1221,115,140 1225,125,150 1229,135,190 1234,150,185 1238,150,170
1243,160,185 1247,185,230 1251,187,222 1254,190,215 1257,245,315 1262,262,295 1266,285,320
1269,320,354 1274,282,305 1279,290,315 1284,250,285 1288,265,285 1293,285,314 1298,250,270
1303,250,268 1308,255,275 1312,252,262 1317,280,310 1322,262,275 1328,260,275 1333,260,280
1338,250,270 1341,220,246 1344,178,215 1347,190,215 1350,155,220 1354,145,165 1360,148,160
1365,140,155 1370,110,130 1373,111,150 1376,117,155 1380,122,140 1385,125,145 1389,122,150
1392,150,170 1396,150,165 1402,150,160 1408,170,190 1412,157,185 1415,180,215 1417,210,282
1420,245,265 1425,250,275 1430,245,275 1433,266,320 1435,300,330 1438,305,355 1440,300,420
1443,412,487 1447,400,430 1450,410,440 1454,440,472 1458,435,450 1463,445,465 1468,425,440
1472,428,445 1475,430,475 1477,475,585 1480,450,560 1483,450,485 1487,440,460 1491,412,440`
  .split(/\s+/).map((s) => s.split(',').map(Number));

function between(points, x) {
  let i = 0;
  while (i < points.length - 2 && points[i + 1][0] < x) i++;
  const a = points[i];
  const b = points[i + 1];
  const t = Math.min(1, Math.max(0, (x - a[0]) / (b[0] - a[0])));
  return a.map((v, k) => v + (b[k] - v) * t);
}

let lastMid = 800;
for (let x = 1; x < 1492; x += 2) {
  const [, high, low] = between(swings, x);
  const jitter = (low - high) * 0.4;
  const top = Math.round(high + (noise(x) - 0.3) * jitter);
  const bottom = Math.max(top + 4, Math.round(low + (noise(x + 7) - 0.6) * jitter));
  const mid = (top + bottom) / 2;
  const rising = mid - lastMid + (noise(x + 3) - 0.5) * 8 < 0;
  add(shapes, 'rect', { x, y: top, width: 1, height: bottom - top, fill: rising ? '#f00' : '#0f0' });
  lastMid = mid;
}

// hand-drawn zones
for (const [x, y, width, height] of [[1044, 296, 682, 81], [803, 560, 908, 67]]) {
  add(shapes, 'rect', { x, y, width, height, fill: 'none', stroke: '#f00', 'stroke-width': 3 });
}

add(shapes, 'path', { d: 'M1793 499H1863', stroke: '#f00', 'stroke-dasharray': '3 3' });
add(shapes, 'path', { d: 'M1863 495L1867 499L1863 503Z', fill: '#f00' });
add(shapes, 'path', { d: 'M1488 72H1498L1493 77Z', fill: '#778899' });
add(shapes, 'rect', { x: 407, y: 217, width: 1, height: 1, fill: '#ccc' });

const highs = [
  ['3871.55', 3, 748], ['3875.49', 79, 743], ['3895.19', 103, 718], ['3869.75', 171, 751],
  ['3896.61', 217, 717], ['3863.69', 253, 758], ['3867.53', 297, 753], ['3949.39', 379, 650],
  ['3977.33', 441, 615], ['3976.77', 457, 615], ['3990.87', 499, 598], ['4049.45', 569, 524],
  ['4059.05', 597, 512], ['4043.59', 645, 532], ['4057.69', 675, 514], ['3994.25', 717, 594],
  ['4006.58', 753, 578], ['4116.81', 871, 440], ['4179.49', 919, 361], ['4217.98', 1023, 312],
  ['4242.01', 1095, 282], ['4378.98', 1173, 110], ['4378.37', 1195, 110], ['4274.21', 1259, 241],
  ['4270.92', 1278, 246], ['4381.35', 1345, 107], ['4132.15', 1443, 420],
];
const lows = [
  ['58', 0, 827], ['3793.17', 17, 864], ['3853.35', 95, 788], ['3852.81', 167, 789],
  ['3861.73', 193, 778], ['3819.37', 225, 831], ['3838.08', 269, 807], ['3854.86', 301, 786],
  ['3926.65', 397, 696], ['3955.92', 443, 659], ['3940.85', 471, 678], ['3961.84', 501, 652],
  ['4026.58', 585, 570], ['4001.39', 621, 602], ['4022.69', 649, 575], ['3944.92', 691, 673],
  ['3946.89', 731, 670], ['3970.65', 771, 641], ['4090.67', 883, 489], ['4090.61', 922, 490],
  ['4165.08', 1027, 396], ['4203.65', 1105, 347], ['4278.76', 1181, 253], ['4186.83', 1243, 368],
  ['4219.01', 1267, 328], ['4221.59', 1293, 325], ['4082.13', 1417, 500], ['4004.36', 1451, 598],
];
for (const [text, x, y] of highs) add(price, 'text', { class: 'label', x, y, fill: '#ff1493' }, text);
for (const [text, x, y] of lows) add(price, 'text', { class: 'label', x, y, fill: '#00bfff' }, text);
add(price, 'text', { class: 'label', x: 1465, y: 409, fill: '#adff2f' }, '4140.91');
add(price, 'text', { class: 'countdown', x: 1498, y: 431 }, '<--14:50');

const arrows = [
  [1475, 586, 1503, 337], [1504, 340, 1530, 576], [1540, 572, 1588, 433],
  [1539, 595, 1568, 688], [1509, 319, 1551, 210],
];
for (const [x1, y1, x2, y2] of arrows) {
  add(price, 'line', { x1, y1, x2, y2, stroke: '#0f0', 'stroke-width': 3, 'marker-end': 'url(#head)' });
}

// tick volume: x, height
const activity = `1,18 5,40 10,48 14,43 20,38 23,28 28,45 36,60 39,63 43,50 50,45 58,60 61,65 65,53 70,40
77,35 82,38 87,22 94,18 98,32 105,45 112,35 120,38 126,45 132,52 139,45 142,40 147,58 153,55 158,55
163,45 168,43 173,38 177,35 179,15 183,17 186,30 192,42 197,25 203,17 208,27 213,30 218,45 224,30
230,38 236,45 242,60 246,65 252,60 258,42 265,35 269,15 275,14 278,28 284,40 288,35 294,30 300,38
308,35 315,33 320,37 327,40 333,55 337,65 341,53 347,45 353,38 360,25 363,12 366,35 372,45 378,38
385,43 390,40 396,45 402,48 410,35 417,45 423,55 427,58 435,50 440,40 446,40 450,33 453,18 457,13
461,32 467,35 480,30 485,45 490,42 494,53 500,40 506,32 512,50 520,58 525,58 530,50 537,45 543,35
546,15 551,14 555,25 560,38 563,42 568,35 575,38 580,48 585,45 590,38 595,42 602,42 607,53 612,63
617,55 623,45 628,45 632,55 635,40 638,18 642,35 648,50 655,60 662,38 667,32 674,52 681,40 686,35
692,30 697,45 702,60 705,68 712,60 717,65 722,50 728,48 731,20 735,25 741,40 748,40 755,45 760,38
767,45 774,50 780,45 788,50 795,62 802,65 808,55 817,50 821,32 825,38 830,58 837,73 842,48 849,35
852,35 856,58 865,48 872,42 878,38 885,50 888,58 895,52 902,45 908,48 911,25 915,18 920,30 926,52
932,55 938,50 943,50 948,73 955,60 962,52 970,45 975,65 980,68 988,55 997,45 1003,28 1008,38 1015,48
1024,42 1032,50 1041,58 1049,70 1056,60 1064,48 1072,52 1080,58 1090,40 1096,25 1104,42 1112,50
1120,44 1130,50 1140,60 1147,68 1156,62 1164,55 1172,60 1182,42 1188,25 1194,60 1202,52 1210,45
1221,72 1230,60 1240,55 1250,62 1258,70 1268,55 1277,42 1282,26 1290,52 1300,44 1310,48 1320,55
1330,50 1345,70 1352,64 1360,58 1368,44 1374,28 1380,50 1390,40 1400,33 1404,50 1407,60 1410,52
1416,72 1420,58 1426,60 1430,54 1435,68 1440,72 1445,70 1450,65 1455,55 1462,58 1466,32 1470,38
1476,72 1482,65 1488,50 1491,30`
  .split(/\s+/).map((s) => s.split(',').map(Number));

const colors = { r: '#d80f1e', g: '#1fbf4a', b: '#1485ff', p: '#b533ff' };
const marks = `4g 6b 8g 10b 12p 16g 30r 36r 60g 104r 124g 128g 146r 154r 192g 214r 216g 218b 236r 242r 244p
246r 284r 286g 324r 330g 332g 334g 336r 368g 372p 402g 420r 426g 436r 464b 466r 492p 514g 526r 558r 560g
564b 580r 594g 632r 652g 698g 700b 702r 704p 714r 744p 746p 768r 772g 794r 800g 824g 880g 884g 886g 908g
922g 924p 928g 930p 946r 976g 978g 980r 1016g 1020p 1050r 1066g 1092r 1108r 1112g 1142r 1170r 1174r 1194r
1206b 1220r 1232g 1260r 1276r 1296g 1314g 1344r 1352g 1370r 1384g 1414r 1416r 1438r 1442g 1474r 1476r`;
const marked = {};
for (const m of marks.split(/\s+/)) marked[parseInt(m, 10)] = colors[m.slice(-1)];

const bars = add(volume, 'g', { class: 'shapes' });
for (let x = 0; x < 1492; x += 2) {
  const [, base] = between(activity, x);
  const height = Math.round(base + (noise(x + 1) - 0.5) * 5) + (marked[x] ? 4 : 0);
  const shade = Math.round(height * 1.24);
  add(bars, 'rect', { x, y: 970 - shade, width: 2, height: shade, fill: '#0f0f0f' });
  add(bars, 'rect', { x, y: 970 - height, width: 2, height, fill: marked[x] || '#333355' });
}

function fill(id, items) {
  const list = document.getElementById(id);
  for (const item of items) {
    const li = document.createElement('li');
    li.textContent = item;
    list.appendChild(li);
  }
}
fill('prices', [
  '4409.90', '4383.65', '4357.40', '4331.15', '4304.90', '4278.65', '4252.40', '4226.15',
  '4199.90', '4173.65', '4147.40', '4121.15', '4094.90', '4068.65', '4042.40', '4016.15',
  '3989.90', '3963.65', '3937.40', '3911.15', '3884.90', '3858.65', '3833.15', '3806.90', '3780.65',
]);
fill('times', [
  '30 Sep 2025', '30 Sep 18:00', '1 Oct 11:00', '2 Oct 04:00', '2 Oct 20:00', '3 Oct 13:00',
  '6 Oct 06:00', '6 Oct 22:00', '7 Oct 15:00', '8 Oct 08:00', '9 Oct 01:00', '9 Oct 17:00',
  '10 Oct 10:00', '13 Oct 03:00', '13 Oct 19:00', '14 Oct 12:00', '15 Oct 05:00', '15 Oct 21:00',
  '16 Oct 14:00', '17 Oct 07:00', '17 Oct 23:00', '20 Oct 16:00', '21 Oct 09:00', '22 Oct 02:00',
]);
```
